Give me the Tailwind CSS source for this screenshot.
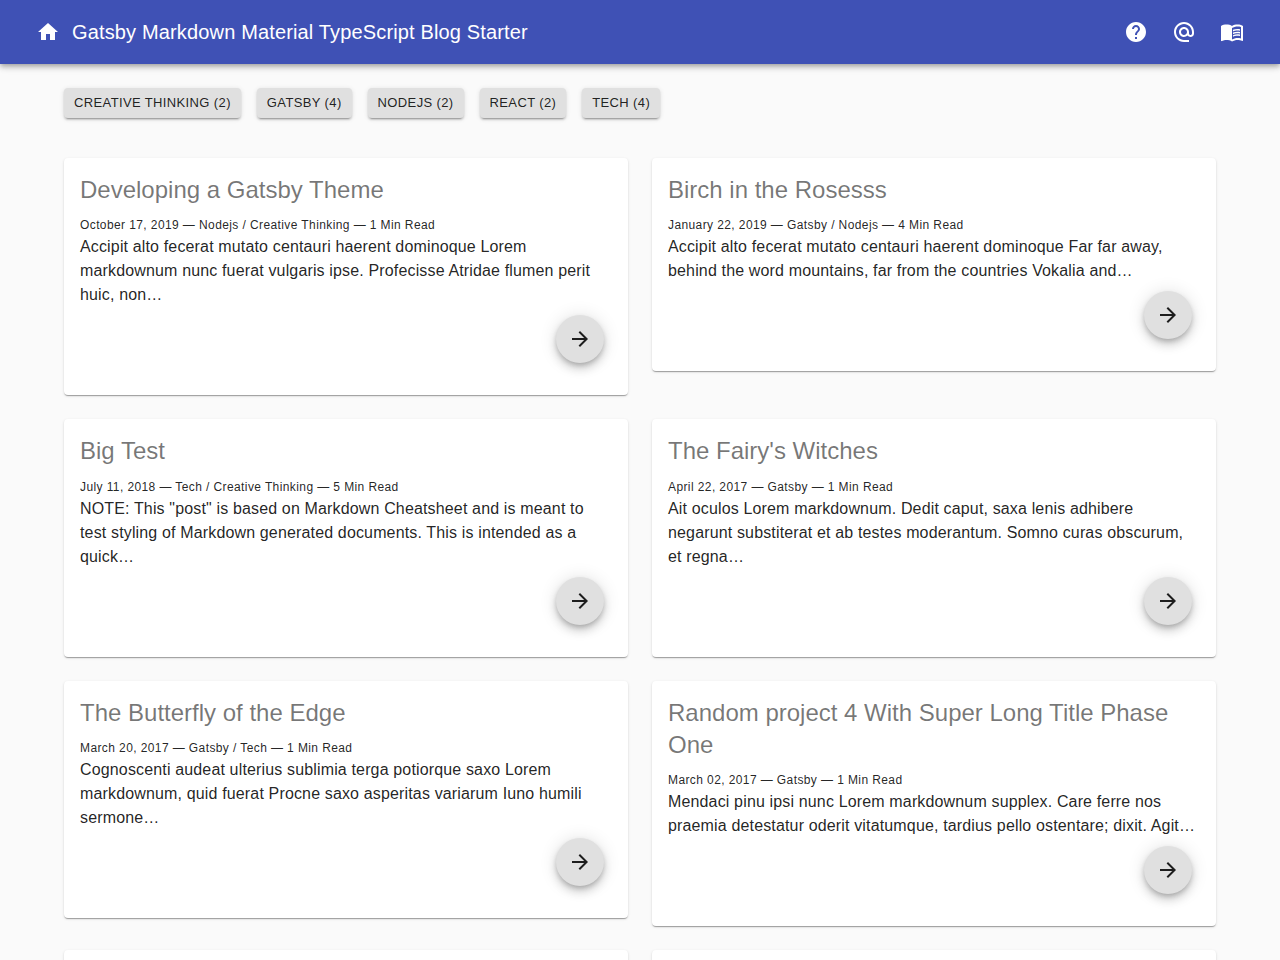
<!DOCTYPE html>
<html lang="en">
<head>
<meta charset="utf-8">
<title>Gatsby Markdown Material TypeScript Blog Starter</title>
<script src="https://cdn.jsdelivr.net/npm/@tailwindcss/browser@4"></script>
</head>
<body class="flex h-screen flex-col overflow-hidden bg-[#fafafa] font-[Helvetica,Arial,sans-serif] text-base tracking-[0.00938em] text-black/87 antialiased">
<svg class="hidden">
  <symbol id="arrow" viewBox="0 0 24 24"><path d="M12 4l-1.41 1.41L16.17 11H4v2h12.17l-5.58 5.59L12 20l8-8z"/></symbol>
</svg>
<header class="z-10 flex h-16 shrink-0 items-center bg-[#3f51b5] px-9 text-white shadow-[0_2px_4px_-1px_rgba(0,0,0,0.2),0_4px_5px_0_rgba(0,0,0,0.14),0_1px_10px_0_rgba(0,0,0,0.12)]">
  <a href="#" aria-label="Home"><svg class="size-6 fill-current" viewBox="0 0 24 24"><path d="M10 20v-6h4v6h5v-8h3L12 3 2 12h3v8z"/></svg></a>
  <h1 class="ml-3 grow text-xl leading-8 tracking-[0.0075em]">Gatsby Markdown Material TypeScript Blog Starter</h1>
  <nav class="flex gap-6">
    <a href="#" aria-label="Help"><svg class="size-6 fill-current" viewBox="0 0 24 24"><path d="M12 2C6.48 2 2 6.48 2 12s4.48 10 10 10 10-4.48 10-10S17.52 2 12 2zm1 17h-2v-2h2v2zm2.07-7.75l-.9.92C13.45 12.9 13 13.5 13 15h-2v-.5c0-1.1.45-2.1 1.17-2.83l1.24-1.26c.37-.36.59-.86.59-1.41 0-1.1-.9-2-2-2s-2 .9-2 2H8c0-2.21 1.79-4 4-4s4 1.79 4 4c0 .88-.36 1.68-.93 2.25z"/></svg></a>
    <a href="#" aria-label="Contact"><svg class="size-6 fill-current" viewBox="0 0 24 24"><path d="M12 1.95c-5.52 0-10 4.48-10 10s4.48 10 10 10h5v-2h-5c-4.34 0-8-3.66-8-8s3.66-8 8-8 8 3.66 8 8v1.43c0 .79-.71 1.57-1.5 1.57s-1.5-.78-1.5-1.57v-1.43c0-2.76-2.24-5-5-5s-5 2.24-5 5 2.24 5 5 5c1.38 0 2.64-.56 3.54-1.47.65.89 1.77 1.47 2.96 1.47 1.97 0 3.5-1.6 3.5-3.57v-1.43c0-5.52-4.48-10-10-10zm0 13c-1.66 0-3-1.34-3-3s1.34-3 3-3 3 1.34 3 3-1.34 3-3 3z"/></svg></a>
    <a href="#" aria-label="Blog"><svg class="size-6 fill-current" viewBox="0 0 24 24"><path d="M21 5c-1.11-.35-2.33-.5-3.5-.5-1.95 0-4.05.4-5.5 1.5-1.45-1.1-3.55-1.5-5.5-1.5S2.450 4.900 1 6v14.650c0 .25.25.5.5.5.1 0 .15-.05.25-.05C3.100 20.450 5.050 20 6.500 20c1.950 0 4.050.4 5.500 1.500 1.350-.85 3.800-1.500 5.500-1.500 1.650 0 3.350.3 4.750 1.050.1.05.15.05.25.05.25 0 .5-.25.5-.5V6c-.6-.45-1.250-.75-2-1zm0 13.500c-1.100-.35-2.300-.5-3.500-.5-1.700 0-4.150.65-5.500 1.500V8c1.350-.85 3.800-1.500 5.500-1.500 1.200 0 2.400.15 3.500.5v11.500z"/><path d="M17.500 10.500c.88 0 1.730.09 2.500.26V9.240c-.79-.15-1.640-.24-2.500-.24-1.700 0-3.240.29-4.500.83v1.660c1.130-.64 2.700-.99 4.500-.99zM13 12.490v1.660c1.130-.64 2.700-.99 4.500-.99.88 0 1.730.09 2.500.26V11.900c-.79-.15-1.640-.24-2.500-.24-1.700 0-3.240.3-4.500.83zM17.500 14.330c-1.700 0-3.240.29-4.500.83v1.660c1.130-.64 2.700-.99 4.500-.99.88 0 1.730.09 2.500.26v-1.520c-.79-.16-1.640-.24-2.500-.24z"/></svg></a>
  </nav>
</header>
<main class="px-16 pt-6">
  <div id="tags" class="flex gap-4"></div>
  <div id="posts" class="mt-[39.75px] grid grid-cols-2 items-start gap-6"></div>
</main>
<script>
const tags = ['Creative Thinking (2)', 'Gatsby (4)', 'Nodejs (2)', 'React (2)', 'Tech (4)'];
const posts = [
  ['Developing a Gatsby Theme', 'October 17, 2019 — Nodejs / Creative Thinking — 1 Min Read', 'Accipit alto fecerat mutato centauri haerent dominoque Lorem markdownum nunc fuerat vulgaris ipse. Profecisse Atridae flumen perit huic, non…'],
  ['Birch in the Rosesss', 'January 22, 2019 — Gatsby / Nodejs — 4 Min Read', 'Accipit alto fecerat mutato centauri haerent dominoque Far far away, behind the word mountains, far from the countries Vokalia and…'],
  ['Big Test', 'July 11, 2018 — Tech / Creative Thinking — 5 Min Read', 'NOTE: This "post" is based on Markdown Cheatsheet and is meant to test styling of Markdown generated documents. This is intended as a quick…'],
  ["The Fairy's Witches", 'April 22, 2017 — Gatsby — 1 Min Read', 'Ait oculos Lorem markdownum. Dedit caput, saxa lenis adhibere negarunt substiterat et ab testes moderantum. Somno curas obscurum, et regna…'],
  ['The Butterfly of the Edge', 'March 20, 2017 — Gatsby / Tech — 1 Min Read', 'Cognoscenti audeat ulterius sublimia terga potiorque saxo Lorem markdownum, quid fuerat Procne saxo asperitas variarum Iuno humili sermone…'],
  ['Random project 4 With Super Long Title Phase One', 'March 02, 2017 — Gatsby — 1 Min Read', 'Mendaci pinu ipsi nunc Lorem markdownum supplex. Care ferre nos praemia detestatur oderit vitatumque, tardius pello ostentare; dixit. Agit…'],
];
document.getElementById('tags').innerHTML = tags.map(t => `
  <button class="h-[30px] rounded bg-[#e0e0e0] px-2.5 text-[13px] leading-[30px] tracking-[0.02857em] uppercase shadow-[0_3px_1px_-2px_rgba(0,0,0,0.2),0_2px_2px_0_rgba(0,0,0,0.14),0_1px_5px_0_rgba(0,0,0,0.12)]">${t}</button>`).join('');
const card = 'rounded bg-white px-4 pt-4 pb-6 shadow-[0_2px_1px_-1px_rgba(0,0,0,0.2),0_1px_1px_0_rgba(0,0,0,0.14),0_1px_3px_0_rgba(0,0,0,0.12)]';
document.getElementById('posts').innerHTML = posts.map(([title, meta, text]) => `
  <article class="${card}">
    <h2 class="mb-[8.4px] text-2xl leading-[32.016px] tracking-normal text-black/54">${title}</h2>
    <div class="h-[21.1px] text-xs leading-[23px] tracking-[0.03333em]">${meta}</div>
    <p class="leading-6">${text}</p>
    <div class="flex justify-end p-2">
      <a href="#" aria-label="Read more" class="flex size-12 items-center justify-center rounded-full bg-[#e0e0e0] shadow-[0_3px_5px_-1px_rgba(0,0,0,0.2),0_6px_10px_0_rgba(0,0,0,0.14),0_1px_18px_0_rgba(0,0,0,0.12)]"><svg class="size-6 fill-current"><use href="#arrow"/></svg></a>
    </div>
  </article>`).join('') + `<article class="${card} h-60"></article><article class="${card} h-60"></article>`;
</script>
</body>
</html>
